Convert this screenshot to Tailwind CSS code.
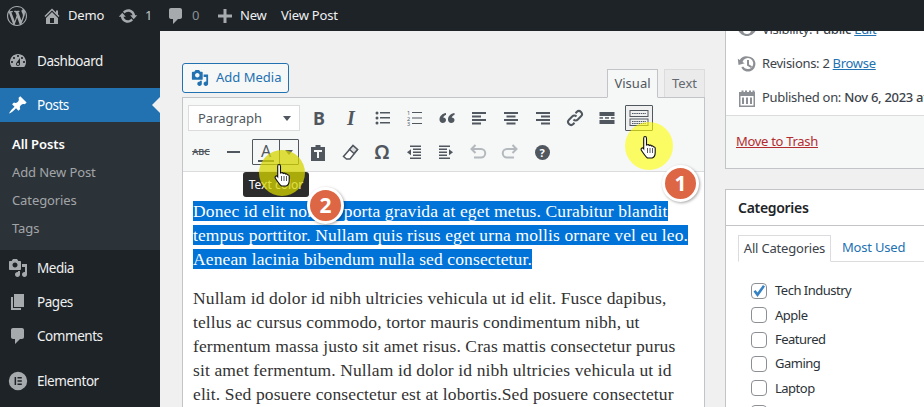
<!DOCTYPE html>
<html lang="en">
  <head>
    <meta charset="UTF-8" />
    <title>Edit Post</title>
    <script src="https://cdn.jsdelivr.net/npm/@tailwindcss/browser@4"></script>
  </head>
  <body class="relative w-[924px] h-[407px] overflow-hidden flex flex-col font-['Noto_Sans',sans-serif] text-[13px] text-[#3c434a]">
    <!-- Admin bar -->
    <header class="h-[31px] shrink-0 bg-[#1d2327] flex items-center text-[#f0f0f1] tracking-[-0.2px] relative z-10">
      <svg class="ml-[7px] w-[20px] h-[20px] fill-[#a7aaad]" viewBox="0 0 20 20"><path d="M20 10c0-5.51-4.49-10-10-10C4.48 0 0 4.49 0 10c0 5.52 4.48 10 10 10 5.51 0 10-4.48 10-10zM7.78 15.37L4.37 6.22c.55-.02 1.17-.08 1.17-.08.5-.06.44-1.13-.06-1.11 0 0-1.45.11-2.37.11-.18 0-.37 0-.58-.01C4.12 2.69 6.87 1.11 10 1.11c2.33 0 4.45.87 6.05 2.34-.68-.11-1.65.39-1.65 1.58 0 .74.45 1.36.9 2.1.35.61.55 1.36.55 2.46 0 1.49-1.4 5-1.4 5l-3.03-8.37c.54-.02.82-.17.82-.17.5-.05.44-1.25-.06-1.22 0 0-1.44.12-2.38.12-.87 0-2.33-.12-2.33-.12-.5-.03-.56 1.2-.06 1.22l.92.08 1.26 3.41zM17.41 10c.24-.64.74-1.87.43-4.25.7 1.29 1.05 2.71 1.05 4.25 0 3.29-1.73 6.24-4.4 7.78.97-2.59 1.94-5.2 2.92-7.78zM6.1 18.09C3.12 16.65 1.11 13.53 1.11 10c0-1.3.23-2.48.72-3.59C3.25 10.3 4.67 14.2 6.1 18.09zm4.03-6.63l2.58 6.98c-.86.29-1.76.45-2.71.45-.79 0-1.57-.11-2.29-.33.81-2.38 1.62-4.74 2.42-7.1z"/></svg>
      <svg class="ml-[15px] w-[20px] h-[20px] fill-[#a7aaad]" viewBox="0 0 20 20"><path d="M16 8.5l1.53 1.53-1.06 1.06L10 4.62l-6.47 6.47-1.06-1.06L10 2.5l4 4v-2h2v4zm-6-2.46l6 5.99V18H4v-5.97zM12 17v-5H8v5h4z"/></svg>
      <span class="ml-[6px] w-[34px]">Demo</span>
      <svg class="ml-[16px] w-[20px] h-[20px] fill-[#a7aaad]" viewBox="0 0 20 20"><path d="M10.2 3.28c3.53 0 6.43 2.61 6.92 6h2.08l-3.5 4-3.5-4h2.32c-.45-1.97-2.21-3.45-4.32-3.45-1.45 0-2.73.71-3.54 1.78L4.95 5.66C6.23 4.2 8.11 3.28 10.2 3.28zm-.4 13.44c-3.52 0-6.43-2.61-6.92-6H.8l3.5-4c1.17 1.33 2.33 2.67 3.5 4H5.48c.45 1.97 2.21 3.45 4.32 3.45 1.45 0 2.73-.71 3.54-1.78l1.71 1.95c-1.28 1.46-3.15 2.38-5.25 2.38z"/></svg>
      <span class="ml-[7px] w-[7px] text-[#c3c4c7]">1</span>
      <svg class="ml-[14px] w-[20px] h-[20px] fill-[#a7aaad]" viewBox="0 0 20 20"><path d="M5 2h9c1.1 0 2 .9 2 2v7c0 1.1-.9 2-2 2h-2l-5 5v-5H5c-1.1 0-2-.9-2-2V4c0-1.1.9-2 2-2z"/></svg>
      <span class="ml-[6px] w-[7px] text-[#8c8f94]">0</span>
      <svg class="ml-[16px] w-[20px] h-[20px] fill-[#a7aaad]" viewBox="0 0 20 20"><path d="M17 8.5v3h-5.5V17h-3v-5.5H3v-3h5.5V3h3v5.5H17z"/></svg>
      <span class="ml-[5px] w-[26px]">New</span>
      <span class="ml-[15px]">View Post</span>
    </header>

    <div class="flex flex-1 min-h-0">
      <!-- Sidebar -->
      <aside class="w-[160px] shrink-0 bg-[#1d2327] pt-[13px] text-[#f0f0f1] text-[13.5px] tracking-[-0.45px]">
        <div class="h-[34px] flex items-center">
          <svg class="ml-[8px] w-[20px] h-[20px] fill-[#a7aaad]" viewBox="0 0 20 20"><path d="M3.76 16h12.48c1.1-1.37 1.76-3.11 1.76-5 0-4.42-3.58-8-8-8s-8 3.58-8 8c0 1.89.66 3.63 1.76 5zM10 4c.55 0 1 .45 1 1s-.45 1-1 1-1-.45-1-1 .45-1 1-1zM6 6c.55 0 1 .45 1 1s-.45 1-1 1-1-.45-1-1 .45-1 1-1zm8 0c.55 0 1 .45 1 1s-.45 1-1 1-1-.45-1-1 .45-1 1-1zm-5.37 5.55L12 7v6c0 1.1-.9 2-2 2s-2-.9-2-2c0-.57.24-1.08.63-1.45zM4 10c.55 0 1 .45 1 1s-.45 1-1 1-1-.45-1-1 .45-1 1-1zm12 0c.55 0 1 .45 1 1s-.45 1-1 1-1-.45-1-1 .45-1 1-1zm-5 3c0-.55-.45-1-1-1s-1 .45-1 1 .45 1 1 1 1-.45 1-1z"/></svg>
          <span class="ml-[9px]">Dashboard</span>
        </div>
        <div class="relative mt-[10px] h-[34px] flex items-center bg-[#2271b1] text-white">
          <svg class="ml-[8px] w-[20px] h-[20px] fill-white" viewBox="0 0 20 20"><path d="M10.44 3.02l1.82-1.82 6.36 6.35-1.83 1.82c-1.05-.68-2.48-.57-3.41.36l-.75.75c-.92.93-1.04 2.35-.35 3.41l-1.83 1.82-2.41-2.41-2.8 2.79c-.42.42-3.38 2.71-3.8 2.29s1.86-3.39 2.28-3.81l2.79-2.79L4.1 9.36l1.83-1.82c1.05.69 2.48.57 3.4-.36l.75-.75c.93-.92 1.05-2.35.36-3.41z"/></svg>
          <span class="ml-[9px]">Posts</span>
          <span class="absolute right-0 top-[9px] w-0 h-0 border-y-[8px] border-y-transparent border-r-[8px] border-r-[#f0f0f1]"></span>
        </div>
        <div class="bg-[#2c3338] pt-[9px] pb-[7px] text-[13px] tracking-[-0.1px] text-[#c3c4c7]/80">
          <div class="h-[28px] flex items-center pl-[12px] font-semibold text-white">All Posts</div>
          <div class="h-[28px] flex items-center pl-[12px]">Add New Post</div>
          <div class="h-[28px] flex items-center pl-[12px]">Categories</div>
          <div class="h-[28px] flex items-center pl-[12px]">Tags</div>
        </div>
        <div class="mt-[1px] h-[34px] flex items-center">
          <svg class="ml-[8px] w-[20px] h-[20px] fill-[#a7aaad]" viewBox="0 0 20 20"><path d="M13 11V4c0-.55-.45-1-1-1h-1.67L9 1H5L3.67 3H2c-.55 0-1 .45-1 1v7c0 .55.45 1 1 1h10c.55 0 1-.45 1-1zM7 4.5c1.38 0 2.5 1.12 2.5 2.5S8.38 9.5 7 9.5 4.5 8.38 4.5 7 5.62 4.5 7 4.5zM14 6h5v10.5c0 1.38-1.12 2.5-2.5 2.5S14 17.88 14 16.5s1.12-2.5 2.5-2.5c.17 0 .34.02.5.05V9h-3V6zm-4 8.05V13h2v3.5c0 1.38-1.12 2.5-2.5 2.5S7 17.88 7 16.5 8.12 14 9.5 14c.17 0 .34.02.5.05z"/></svg>
          <span class="ml-[9px]">Media</span>
        </div>
        <div class="h-[34px] flex items-center">
          <svg class="ml-[8px] w-[20px] h-[20px] fill-[#a7aaad]" viewBox="0 0 20 20"><path d="M6 15V2h10v13H6zm-1 1h8v2H3V5h2v11z"/></svg>
          <span class="ml-[9px]">Pages</span>
        </div>
        <div class="h-[34px] flex items-center">
          <svg class="ml-[8px] w-[20px] h-[20px] fill-[#a7aaad]" viewBox="0 0 20 20"><path d="M5 2h9c1.1 0 2 .9 2 2v7c0 1.1-.9 2-2 2h-2l-5 5v-5H5c-1.1 0-2-.9-2-2V4c0-1.1.9-2 2-2z"/></svg>
          <span class="ml-[9px]">Comments</span>
        </div>
        <div class="mt-[11px] h-[34px] flex items-center">
          <svg class="ml-[8px] w-[20px] h-[20px] fill-[#a7aaad]" viewBox="0 0 20 20"><path fill-rule="evenodd" d="M10 .8a9.2 9.2 0 1 0 0 18.4A9.2 9.2 0 0 0 10 .8zM6.6 6h1.5v8H6.600zM9.500 6h4.300v1.500H9.500zm0 3.200h4.300v1.500H9.500zm0 3.300h4.300V14H9.500z"/></svg>
          <span class="ml-[9px]">Elementor</span>
        </div>
      </aside>

      <main class="flex-1 min-w-0 bg-[#f0f0f1] flex pl-[22px] gap-[20px] overflow-hidden">
        <!-- Editor column -->
        <section class="w-[523px] shrink-0 pt-[32px]">
          <div class="h-[34px] flex justify-between">
            <button class="h-[30px] w-[107px] flex items-center border border-[#2271b1] rounded-[3px] bg-[#f6f7f7] text-[#2271b1]">
              <svg class="ml-[8px] w-[18px] h-[18px] fill-[#2271b1]" viewBox="0 0 20 20"><path d="M13 11V4c0-.55-.45-1-1-1h-1.67L9 1H5L3.67 3H2c-.55 0-1 .45-1 1v7c0 .55.45 1 1 1h10c.55 0 1-.45 1-1zM7 4.500c1.380 0 2.500 1.120 2.500 2.500S8.380 9.500 7 9.500 4.500 8.380 4.500 7 5.620 4.500 7 4.500zM14 6h5v10.500c0 1.380-1.120 2.500-2.500 2.500S14 17.880 14 16.500s1.120-2.500 2.500-2.500c.170 0 .340.020.500.050V9h-3V6zm-4 8.050V13h2v3.500c0 1.380-1.120 2.500-2.500 2.500S7 17.880 7 16.500 8.120 14 9.500 14c.170 0 .340.020.500.050z"/></svg>
              <span class="ml-[7px]">Add Media</span>
            </button>
            <div class="flex items-end gap-[6px] relative z-[1]">
              <div class="h-[29px] w-[51px] -mb-px flex items-center justify-center border border-[#c3c4c7] border-b-[#f6f7f7] bg-[#f6f7f7] text-[#50575e]">Visual</div>
              <div class="h-[28px] w-[41px] flex items-center justify-center border border-[#dcdcde] border-b-0 bg-[#ebebeb] text-[#646970]">Text</div>
            </div>
          </div>
          <div class="border border-[#c3c4c7] bg-white h-[400px]">
            <!-- Toolbar -->
            <div class="bg-[#f6f7f7] border-b border-[#dcdcde] h-[74px] pt-[7px] text-[#50575e]">
              <div class="flex h-[26px] pl-[5px]">
                <div class="w-[112px] h-[26px] bg-white border border-[#dcdcde] flex items-center justify-between pl-[9px] pr-[8px] pt-px text-[#50575e]">
                  <span>Paragraph</span>
                  <span class="w-0 h-0 border-x-[4px] border-x-transparent border-t-[5px] border-t-[#50575e]"></span>
                </div>
                <div class="ml-[3px] w-[32px] flex items-center justify-center text-[18px] font-bold">B</div>
                <div class="w-[32px] flex items-center justify-center text-[20px] font-bold italic font-['Liberation_Serif',serif]">I</div>
                <div class="w-[32px] flex items-center justify-center">
                  <svg class="w-[16px] h-[16px] fill-[#50575e]" viewBox="0 0 16 16"><circle cx="2" cy="3" r="1.500"/><circle cx="2" cy="8" r="1.500"/><circle cx="2" cy="13" r="1.500"/><rect x="5" y="2" width="10" height="1.500"/><rect x="5" y="7" width="10" height="1.500"/><rect x="5" y="12" width="10" height="1.500"/></svg>
                </div>
                <div class="w-[32px] flex items-center justify-center">
                  <svg class="w-[16px] h-[16px] fill-[#50575e]" viewBox="0 0 16 16"><text x="0" y="5" font-size="5.500" font-family="Noto Sans">1</text><text x="0" y="10.500" font-size="5.500" font-family="Noto Sans">2</text><text x="0" y="16" font-size="5.500" font-family="Noto Sans">3</text><rect x="5" y="2" width="10" height="1"/><rect x="5" y="7.500" width="10" height="1"/><rect x="5" y="13" width="10" height="1"/></svg>
                </div>
                <div class="w-[32px] flex items-center justify-center">
                  <svg class="w-[16px] h-[16px] fill-[#50575e]" viewBox="0 0 16 16"><path d="M7 3C3.500 3.500 .5 6 .5 9.500.5 11.500 2 13 3.700 13S7 11.700 7 10 5.800 7.400 4.200 7.400C4.500 6.200 5.700 5.200 7 4.900zM15.500 3C12 3.500 9 6 9 9.500 9 11.500 10.500 13 12.200 13s3.300-1.300 3.300-3-1.200-2.600-2.800-2.600c.300-1.200 1.500-2.200 2.800-2.500z"/></svg>
                </div>
                <div class="w-[32px] flex items-center justify-center">
                  <svg class="w-[16px] h-[16px] fill-[#50575e]" viewBox="0 0 16 16"><rect x="1" y="2" width="14" height="2"/><rect x="1" y="5.500" width="9" height="2"/><rect x="1" y="9" width="14" height="2"/><rect x="1" y="12.500" width="9" height="2"/></svg>
                </div>
                <div class="w-[32px] flex items-center justify-center">
                  <svg class="w-[16px] h-[16px] fill-[#50575e]" viewBox="0 0 16 16"><rect x="1" y="2" width="14" height="2"/><rect x="3.500" y="5.500" width="9" height="2"/><rect x="1" y="9" width="14" height="2"/><rect x="3.500" y="12.500" width="9" height="2"/></svg>
                </div>
                <div class="w-[32px] flex items-center justify-center">
                  <svg class="w-[16px] h-[16px] fill-[#50575e]" viewBox="0 0 16 16"><rect x="1" y="2" width="14" height="2"/><rect x="6" y="5.500" width="9" height="2"/><rect x="1" y="9" width="14" height="2"/><rect x="6" y="12.500" width="9" height="2"/></svg>
                </div>
                <div class="w-[32px] flex items-center justify-center">
                  <svg class="w-[18px] h-[18px] fill-none stroke-[#50575e] stroke-[2]" viewBox="0 0 18 18"><path d="M7.500 10.500a3 3 0 0 0 4.300 0l3.200-3.200a3 3 0 0 0-4.300-4.300L9.500 4.200"/><path d="M10.500 7.500a3 3 0 0 0-4.300 0L3 10.700A3 3 0 0 0 7.300 15l1.200-1.200"/></svg>
                </div>
                <div class="w-[32px] flex items-center justify-center">
                  <svg class="w-[16px] h-[16px] fill-[#50575e]" viewBox="0 0 16 16"><rect x="0.500" y="2" width="15" height="4"/><rect x="0.500" y="7.200" width="3.500" height="1.500"/><rect x="6" y="7.200" width="4" height="1.500"/><rect x="12" y="7.200" width="3.500" height="1.500"/><rect x="0.500" y="10" width="15" height="4"/></svg>
                </div>
                <div class="ml-[2px] w-[28px] h-[26px] border border-[#50575e] rounded-[1px] bg-[#f0f0f1] flex items-center justify-center">
                  <svg class="w-[20px] h-[18px]" viewBox="0 0 20 18"><rect x="1" y="1.500" width="18" height="6" fill="none" stroke="#50575e" stroke-width="1"/><rect x="1" y="10" width="18" height="6.500" fill="none" stroke="#50575e" stroke-width="1"/><path d="M3 4.500h14M3 12.500h14M3 14.500h14" stroke="#50575e" stroke-width="1.200" stroke-dasharray="1.500 .7"/></svg>
                </div>
              </div>
              <div class="flex h-[26px] mt-[8px] pl-[2px]">
                <div class="w-[32px] flex items-center justify-center text-[9px] font-semibold line-through">ABC</div>
                <div class="w-[32px] flex items-center justify-center">
                  <span class="block w-[13px] h-[2px] bg-[#50575e]"></span>
                </div>
                <div class="ml-[3px] w-[47px] h-[26px] border border-[#50575e] rounded-[1px] flex">
                  <div class="w-[27px] border-r border-[#50575e] flex flex-col items-center justify-center">
                    <span class="text-[16px] leading-[17px] text-[#50575e]">A</span>
                    <span class="block w-[16px] h-[2px] bg-[#50575e]"></span>
                  </div>
                  <div class="flex-1 flex items-center justify-center">
                    <span class="w-0 h-0 border-x-[4px] border-x-transparent border-t-[5px] border-t-[#50575e]"></span>
                  </div>
                </div>
                <div class="ml-[3px] w-[32px] flex items-center justify-center">
                  <svg class="w-[16px] h-[17px] fill-[#50575e]" viewBox="0 0 16 17"><path fill-rule="evenodd" d="M5.500 1h5v2H15v14H1V3h4.500zM4 6v2h3v6h2V8h3V6z"/></svg>
                </div>
                <div class="w-[32px] flex items-center justify-center">
                  <svg class="w-[17px] h-[17px] fill-none stroke-[#50575e] stroke-[1.500]" viewBox="0 0 17 17"><path d="M11 1.500l4.500 4L8 15H4.500L1.500 12.500z" fill="#fff"/><path d="M11 1.500l4.500 4-3.500 4-4.500-4z" fill="#dcdcde"/></svg>
                </div>
                <div class="w-[32px] flex items-center justify-center text-[20px] font-semibold">Ω</div>
                <div class="w-[32px] flex items-center justify-center">
                  <svg class="w-[16px] h-[16px] fill-[#50575e]" viewBox="0 0 16 16"><rect x="4" y="1.500" width="11" height="1.500"/><rect x="7" y="4.500" width="8" height="1.500"/><rect x="7" y="7.500" width="8" height="1.500"/><rect x="7" y="10.500" width="8" height="1.500"/><rect x="4" y="13.500" width="11" height="1.500"/><path d="M1 8.200l4-3v6z"/></svg>
                </div>
                <div class="w-[32px] flex items-center justify-center">
                  <svg class="w-[16px] h-[16px] fill-[#50575e]" viewBox="0 0 16 16"><rect x="1" y="1.500" width="11" height="1.500"/><rect x="1" y="4.500" width="8" height="1.500"/><rect x="1" y="7.500" width="8" height="1.500"/><rect x="1" y="10.500" width="8" height="1.500"/><rect x="1" y="13.500" width="11" height="1.500"/><path d="M15 8.200l-4-3v6z"/></svg>
                </div>
                <div class="w-[32px] flex items-center justify-center">
                  <svg class="w-[18px] h-[16px] fill-none stroke-[#b4b9be] stroke-[2]" viewBox="0 0 18 16"><path d="M3 5h9a4 4 0 0 1 0 8.500H5"/><path d="M6.500 1L2.500 5l4 4" /></svg>
                </div>
                <div class="w-[32px] flex items-center justify-center">
                  <svg class="w-[18px] h-[16px] fill-none stroke-[#b4b9be] stroke-[2]" viewBox="0 0 18 16"><path d="M15 5H6a4 4 0 0 0 0 8.500h7"/><path d="M11.500 1l4 4-4 4"/></svg>
                </div>
                <div class="w-[32px] flex items-center justify-center">
                  <span class="w-[15px] h-[15px] rounded-full bg-[#50575e] text-white text-[11px] leading-[15px] font-bold text-center">?</span>
                </div>
              </div>
            </div>
            <!-- Editor body -->
            <div class="px-[10px] pt-[27px] font-['Liberation_Serif',serif] text-[17.5px] leading-[24px] text-[#333] tracking-[0.12px]">
              <p class="whitespace-nowrap"><span class="bg-[#0073d8] text-white">Donec id elit non mi porta gravida at eget metus. Curabitur blandit<br />tempus porttitor. Nullam quis risus eget urna mollis ornare vel eu leo.<br />Aenean lacinia bibendum nulla sed consectetur.</span></p>
              <p class="mt-[15px] whitespace-nowrap">Nullam id dolor id nibh ultricies vehicula ut id elit. Fusce dapibus,<br />tellus ac cursus commodo, tortor mauris condimentum nibh, ut<br />fermentum massa justo sit amet risus. Cras mattis consectetur purus<br />sit amet fermentum. Nullam id dolor id nibh ultricies vehicula ut id<br />elit. Sed posuere consectetur est at lobortis.Sed posuere consectetur</p>
            </div>
          </div>
        </section>

        <!-- Right column -->
        <section class="flex-1 min-w-0 overflow-hidden">
          <div class="w-[300px] -mt-[19px] border border-[#c3c4c7] bg-white whitespace-nowrap tracking-[-0.3px]">
            <div class="h-[34px] flex items-center pl-[11px]">
              <svg class="w-[20px] h-[20px] fill-[#8c8f94]" viewBox="0 0 20 20"><path d="M10 4C5.500 4 2 7.500 1 10c1 2.500 4.500 6 9 6s8-3.500 9-6c-1-2.500-4.500-6-9-6zm0 10a4 4 0 1 1 0-8 4 4 0 0 1 0 8z"/></svg>
              <span class="ml-[5px]">Visibility: <span class="font-medium">Public</span> <span class="text-[#2271b1] underline">Edit</span></span>
            </div>
            <div class="h-[34px] flex items-center pl-[11px]">
              <svg class="w-[20px] h-[20px] fill-[#8c8f94]" viewBox="0 0 20 20"><path d="M11 2.500a7.500 7.500 0 1 1-6.700 10.900l1.800-.9A5.500 5.500 0 1 0 5.500 8l2.200 1.200L1.500 11 .8 4.800l2 1.200A7.500 7.500 0 0 1 11 2.500zM10 6h2v4.500l3 1.800-1 1.700-4-2.400z"/></svg>
              <span class="ml-[5px]">Revisions: 2 <span class="text-[#2271b1] underline">Browse</span></span>
            </div>
            <div class="h-[34px] flex items-center pl-[11px]">
              <svg class="w-[20px] h-[20px] fill-[#8c8f94]" viewBox="0 0 20 20"><path fill-rule="evenodd" d="M2 4h2.500V2.500h2V4h1.500V2.500h2V4H12V2.500h2V4h1.500V2.500h2V4H18v15H2zm1.500 4v9.500h13V8zM5 9.500h2V16H5zm4 0h2V16H9zm4 0h2V16h-2z"/></svg>
              <span class="ml-[5px]">Published on: <span class="font-medium">Nov 6, 2023 at 09:21</span></span>
            </div>
            <div class="h-[53px] border-t border-[#dcdcde] bg-[#f6f7f7] flex items-center pl-[10px]">
              <span class="text-[#b32d2e] underline">Move to Trash</span>
            </div>
          </div>

          <div class="w-[300px] mt-[20px] border border-[#c3c4c7] bg-white whitespace-nowrap h-[300px]">
            <div class="h-[36px] border-b border-[#c3c4c7] flex items-center pl-[12px] text-[14px] font-semibold tracking-[-0.3px] text-[#1d2327]">Categories</div>
            <div class="pt-[9px] pl-[12px]">
              <div class="flex h-[27px] border-b border-[#dcdcde] tracking-[-0.2px]">
                <div class="w-[93px] h-[27px] border border-[#dcdcde] border-b-white flex items-center justify-center text-[#3c434a]">All Categories</div>
                <div class="ml-[11px] flex items-center text-[#2271b1]">Most Used</div>
              </div>
              <div class="pt-[17px] pl-[13px] text-[#2c3338] tracking-[-0.5px]">
                <div class="h-[24.3px] flex items-center">
                  <span class="w-[16px] h-[16px] border border-[#8c8f94] rounded-[4px] flex items-center justify-center">
                    <svg class="w-[14px] h-[14px] fill-[#3582c4]" viewBox="0 0 14 14"><path d="M5.500 13L1.500 7.500l2-1.500 2 2.500L11 1l2 1.500z"/></svg>
                  </span>
                  <span class="ml-[8px]">Tech Industry</span>
                </div>
                <div class="h-[24.3px] flex items-center"><span class="w-[16px] h-[16px] border border-[#8c8f94] rounded-[4px]"></span><span class="ml-[8px]">Apple</span></div>
                <div class="h-[24.3px] flex items-center"><span class="w-[16px] h-[16px] border border-[#8c8f94] rounded-[4px]"></span><span class="ml-[8px]">Featured</span></div>
                <div class="h-[24.3px] flex items-center"><span class="w-[16px] h-[16px] border border-[#8c8f94] rounded-[4px]"></span><span class="ml-[8px]">Gaming</span></div>
                <div class="h-[24.3px] flex items-center"><span class="w-[16px] h-[16px] border border-[#8c8f94] rounded-[4px]"></span><span class="ml-[8px]">Laptop</span></div>
                <div class="h-[24.3px] flex items-center"><span class="w-[16px] h-[16px] border border-[#8c8f94] rounded-[4px]"></span><span class="ml-[8px]">Smartphones</span></div>
              </div>
            </div>
          </div>
        </section>
      </main>
    </div>

    <!-- Tutorial overlays -->
    <div class="absolute left-[243px] top-[172px] w-[66px] h-[25px] rounded-[3px] bg-[#2c2c2c] text-white text-[12px] leading-[25px] text-center">Text color</div>
    <div class="absolute left-[625px] top-[122px] w-[48px] h-[48px] rounded-full bg-[#ffff00]/60"></div>
    <div class="absolute left-[259px] top-[150px] w-[46px] h-[46px] rounded-full bg-[#d4d400]/75"></div>
    <svg class="absolute left-[640px] top-[135px] w-[18px] h-[24px]" viewBox="0 0 18 24"><path d="M5 1.500c1 0 1.500.8 1.500 1.700V10l1-.3c.8-.2 1.500.1 1.800.7.8-.4 1.800-.2 2.200.6.800-.3 1.700 0 2 .8.900-.1 1.700.5 1.700 1.500v4.200c0 2.500-1.500 5-3 5.500H7.500C6 22 3.800 19 1.500 15.500c-.7-1-.4-2 .2-2.400.8-.5 1.500 0 2 .7V3.200c0-1 .5-1.700 1.300-1.700z" fill="#fff" stroke="#111" stroke-width="1.100"/><path d="M7.500 13v5M10 13v5M12.500 13v5" stroke="#111" stroke-width=".7"/></svg>
    <svg class="absolute left-[274px] top-[163px] w-[18px] h-[24px]" viewBox="0 0 18 24"><path d="M5 1.500c1 0 1.500.8 1.500 1.700V10l1-.3c.8-.2 1.500.1 1.800.7.8-.4 1.800-.2 2.200.6.800-.3 1.700 0 2 .8.900-.1 1.700.5 1.700 1.500v4.200c0 2.500-1.500 5-3 5.500H7.500C6 22 3.800 19 1.500 15.500c-.7-1-.4-2 .2-2.400.8-.5 1.500 0 2 .7V3.200c0-1 .5-1.700 1.300-1.700z" fill="#fff" stroke="#111" stroke-width="1.100"/><path d="M7.500 13v5M10 13v5M12.500 13v5" stroke="#111" stroke-width=".7"/></svg>
    <div class="absolute left-[662px] top-[165px] w-[37px] h-[37px] rounded-full bg-[#dd6645] border-[3px] border-white shadow-[1px_1px_3px_rgba(0,0,0,0.35)] flex items-center justify-center text-white text-[21px] font-bold">1</div>
    <div class="absolute left-[307px] top-[187px] w-[37px] h-[37px] rounded-full bg-[#dd6645] border-[3px] border-white shadow-[1px_1px_3px_rgba(0,0,0,0.35)] flex items-center justify-center text-white text-[21px] font-bold">2</div>
  </body>
</html>
